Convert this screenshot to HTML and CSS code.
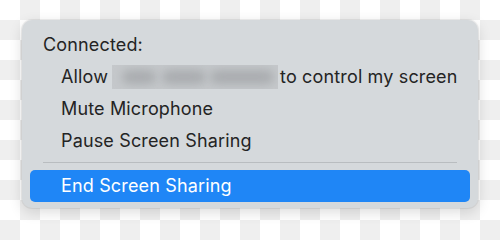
FILE: index.html
```html
<!DOCTYPE html>
<html lang="en">
<head>
<meta charset="utf-8">
<title>Screen Sharing Menu</title>
<link rel="stylesheet" href="styles.css">
</head>
<body>
<div class="menu">
  <div class="row header">Connected:</div>
  <div class="row item">Allow <span class="redact"><span class="blob b1"></span><span class="blob b2"></span><span class="blob b3"></span></span>to control my screen</div>
  <div class="row item">Mute Microphone</div>
  <div class="row item">Pause Screen Sharing</div>
  <div class="sep"></div>
  <div class="row item active">End Screen Sharing</div>
</div>
</body>
</html>
```
FILE: styles.css
```css
html, body {
  margin: 0;
  padding: 0;
}
body {
  width: 500px;
  height: 240px;
  box-sizing: border-box;
  padding: 20px 22px 0 22px;
  background: repeating-conic-gradient(#efefef 0 25%, #ffffff 0 50%) 0 0 / 40px 40px;
  font-family: Inter, "Noto Sans", "Liberation Sans", sans-serif;
}
.menu {
  width: 456px;
  height: 188px;
  box-sizing: border-box;
  padding: 8.5px 8px 6px 8px;
  background: #d5d9dc;
  border-radius: 10px;
  box-shadow: 0 0 0 1px rgba(0, 0, 0, 0.06), 0 4px 14px rgba(0, 0, 0, 0.14);
  display: flex;
  flex-direction: column;
}
.row {
  height: 32px;
  line-height: 32px;
  font-size: 18px;
  letter-spacing: 0.15px;
  color: #242424;
  white-space: nowrap;
  display: flex;
  align-items: center;
}
.header {
  padding-left: 13px;
}
.item {
  padding-left: 31px;
}
.redact {
  position: relative;
  display: inline-block;
  width: 166px;
  height: 24px;
  margin-left: 4px;
  margin-right: 2px;
  background: #c5c8cb;
  overflow: hidden;
}
.blob {
  position: absolute;
  top: 5px;
  height: 14px;
  background: #a9acaf;
  border-radius: 7px;
  filter: blur(5px);
}
.b1 { left: 10px; width: 34px; }
.b2 { left: 50px; width: 44px; }
.b3 { left: 98px; width: 64px; }
.sep {
  height: 1px;
  margin: 5.5px 13px 7.5px 13px;
  background: #b9bdc0;
}
.active {
  background: #1f86f6;
  color: #ffffff;
  border-radius: 5px;
}
```
